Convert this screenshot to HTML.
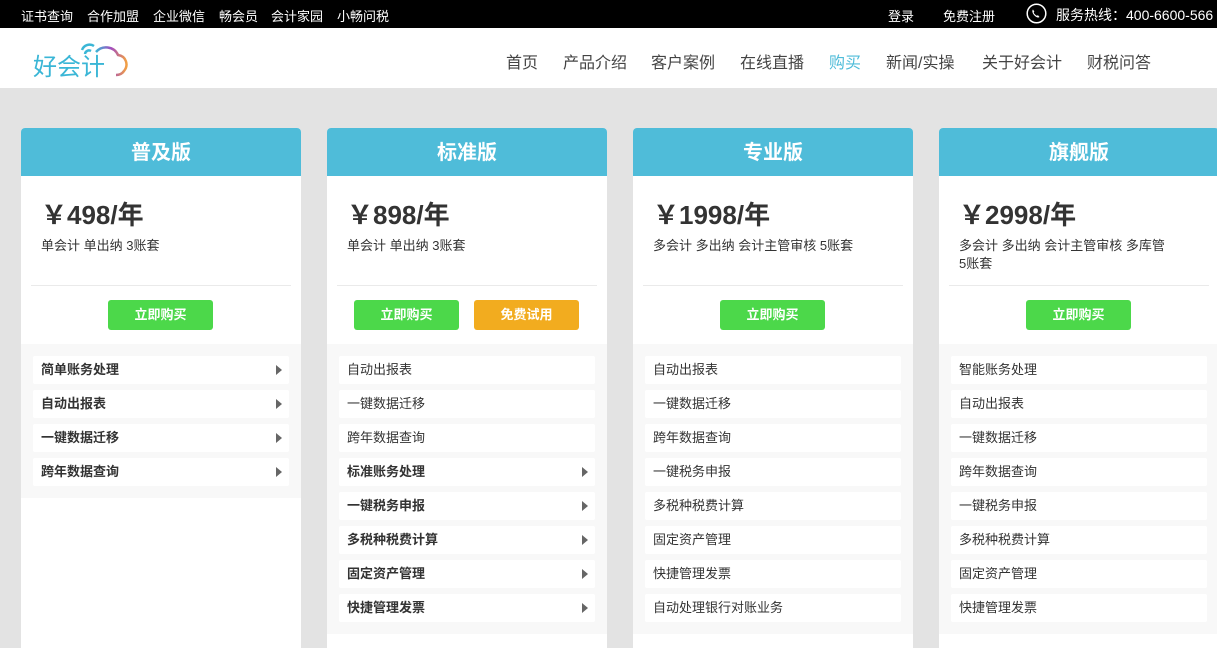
<!DOCTYPE html>
<html><head><meta charset="utf-8"><style>
*{margin:0;padding:0;box-sizing:border-box}
body{width:1217px;height:624px;overflow:hidden;background:#e3e3e3;font-family:"Liberation Sans","Microsoft YaHei","Noto Sans CJK SC",sans-serif;position:relative}
.top{position:absolute;left:0;top:0;width:1217px;height:28px;background:#000;color:#fff;font-size:13px}
.top span{position:absolute;top:6px;white-space:nowrap}
.hdr{position:absolute;left:0;top:28px;width:1217px;height:60px;background:#fff}
.nav{position:absolute;top:21px;font-size:16px;color:#444;white-space:nowrap}
.card{position:absolute;top:128px;width:280px;height:520px;background:#fff;border-radius:4px 4px 0 0;overflow:hidden}
.ch{height:48px;background:#4fbcd9;color:#fff;font-size:20px;font-weight:bold;text-align:center;line-height:51px}
.price{position:absolute;left:20px;top:67px;font-size:26px;font-weight:bold;color:#333}
.desc{position:absolute;left:20px;top:109px;font-size:13px;color:#333;line-height:18px;width:240px}
.div{position:absolute;left:10px;right:10px;top:157px;border-top:1px solid #eaeaea}
.btn{position:absolute;top:172px;width:105px;height:30px;border-radius:3px;color:#fff;font-weight:bold;font-size:13px;text-align:center;line-height:30px}
.list{position:absolute;left:0;top:216px;width:280px;background:#f8f8f8;padding:12px 12px 6px}
.it{height:28px;background:#fff;margin-bottom:6px;font-size:13px;color:#333;line-height:28px;padding-left:8px;position:relative;border-radius:2px}
.it.b{font-weight:bold}
.it.b:after{content:"";position:absolute;right:7px;top:9px;border-left:6px solid #666;border-top:5px solid transparent;border-bottom:5px solid transparent}
</style></head><body>
<div class="top">
<span style="left:21px">证书查询</span><span style="left:87px">合作加盟</span><span style="left:153px">企业微信</span><span style="left:219px">畅会员</span><span style="left:271px">会计家园</span><span style="left:337px">小畅问税</span>
<span style="left:888px">登录</span><span style="left:943px">免费注册</span>
<svg style="position:absolute;left:1026px;top:3px" width="21" height="21" viewBox="0 0 21 21"><circle cx="10.5" cy="10.5" r="9.3" fill="none" stroke="#fff" stroke-width="1.5"/><path d="M7 6.5c-1 1 -1 3 1 5.5s4.5 3 5.5 2l-1.5-1.8-1.3.6c-1-.5-2.5-2-3-3l.6-1.3z" fill="#fff"/></svg>
<span style="left:1056px;font-size:14px;top:5px">服务热线：400-6600-566</span>
</div>
<div class="hdr">
<svg style="position:absolute;left:30px;top:8px" width="105" height="44" viewBox="0 0 105 44">
<defs><linearGradient id="g" x1="0" x2="1"><stop offset="0" stop-color="#3ab6d6"/><stop offset=".5" stop-color="#a24dbf"/><stop offset="1" stop-color="#f2a043"/></linearGradient></defs>
<path d="M66 16c6-7 18-6 22 3 8 1 11 10 6 16-2 3-5 4-8 4" fill="none" stroke="url(#g)" stroke-width="2.5"/>
<path d="M52 14a8 8 0 0 1 12-4M55 18a4 4 0 0 1 6-3" fill="none" stroke="#3ab6d6" stroke-width="2.5"/>
<text x="3" y="39" font-size="24" fill="#3ab6d6" font-family="Noto Sans CJK SC,sans-serif">好会计</text>
</svg>
<span class="nav" style="left:506px">首页</span><span class="nav" style="left:563px">产品介绍</span><span class="nav" style="left:651px">客户案例</span><span class="nav" style="left:740px">在线直播</span><span class="nav" style="left:829px;color:#4fbcd9">购买</span><span class="nav" style="left:886px">新闻/实操</span><span class="nav" style="left:982px">关于好会计</span><span class="nav" style="left:1087px">财税问答</span>
</div>

<div class="card" style="left:21px"><div class="ch">普及版</div>
<div class="price">￥498/年</div><div class="desc">单会计 单出纳 3账套</div><div class="div"></div>
<div class="btn" style="left:87px;background:#4cd84a">立即购买</div>
<div class="list"><div class="it b">简单账务处理</div><div class="it b">自动出报表</div><div class="it b">一键数据迁移</div><div class="it b">跨年数据查询</div></div></div>

<div class="card" style="left:327px"><div class="ch">标准版</div>
<div class="price">￥898/年</div><div class="desc">单会计 单出纳 3账套</div><div class="div"></div>
<div class="btn" style="left:27px;background:#4cd84a">立即购买</div><div class="btn" style="left:147px;background:#f2ac1f">免费试用</div>
<div class="list"><div class="it">自动出报表</div><div class="it">一键数据迁移</div><div class="it">跨年数据查询</div><div class="it b">标准账务处理</div><div class="it b">一键税务申报</div><div class="it b">多税种税费计算</div><div class="it b">固定资产管理</div><div class="it b">快捷管理发票</div></div></div>

<div class="card" style="left:633px"><div class="ch">专业版</div>
<div class="price">￥1998/年</div><div class="desc">多会计 多出纳 会计主管审核 5账套</div><div class="div"></div>
<div class="btn" style="left:87px;background:#4cd84a">立即购买</div>
<div class="list"><div class="it">自动出报表</div><div class="it">一键数据迁移</div><div class="it">跨年数据查询</div><div class="it">一键税务申报</div><div class="it">多税种税费计算</div><div class="it">固定资产管理</div><div class="it">快捷管理发票</div><div class="it">自动处理银行对账业务</div></div></div>

<div class="card" style="left:939px"><div class="ch">旗舰版</div>
<div class="price">￥2998/年</div><div class="desc">多会计 多出纳 会计主管审核 多库管<br>5账套</div><div class="div"></div>
<div class="btn" style="left:87px;background:#4cd84a">立即购买</div>
<div class="list"><div class="it">智能账务处理</div><div class="it">自动出报表</div><div class="it">一键数据迁移</div><div class="it">跨年数据查询</div><div class="it">一键税务申报</div><div class="it">多税种税费计算</div><div class="it">固定资产管理</div><div class="it">快捷管理发票</div></div></div>
</body></html>
